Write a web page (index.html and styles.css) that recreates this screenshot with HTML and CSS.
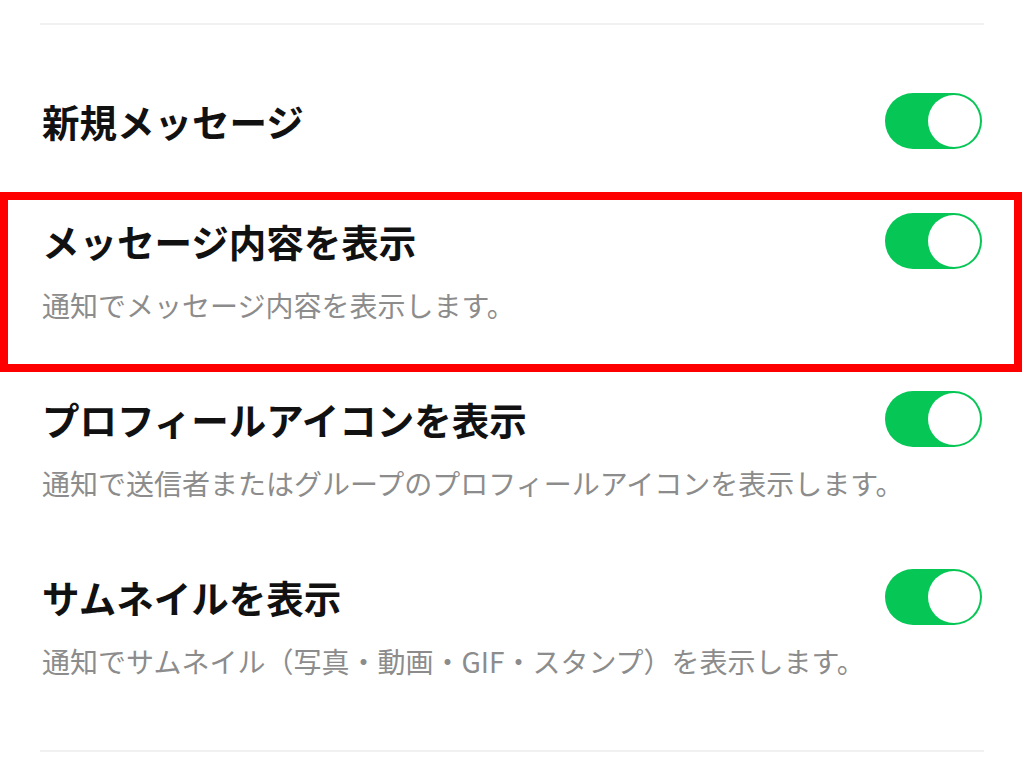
FILE: index.html
```html
<!DOCTYPE html>
<html lang="ja">
<head>
<meta charset="utf-8">
<title>通知設定</title>
<link rel="stylesheet" href="styles.css">
</head>
<body>
<div class="page">
  <div class="divider"></div>
  <div class="section">
    <div class="row">
      <div class="row-head">
        <span class="title">新規メッセージ</span>
        <span class="toggle"><span class="knob"></span></span>
      </div>
    </div>
    <div class="row">
      <div class="row-head">
        <span class="title">メッセージ内容を表示</span>
        <span class="toggle"><span class="knob"></span></span>
      </div>
      <div class="desc">通知でメッセージ内容を表示します。</div>
    </div>
    <div class="row">
      <div class="row-head">
        <span class="title">プロフィールアイコンを表示</span>
        <span class="toggle"><span class="knob"></span></span>
      </div>
      <div class="desc">通知で送信者またはグループのプロフィールアイコンを表示します。</div>
    </div>
    <div class="row">
      <div class="row-head">
        <span class="title">サムネイルを表示</span>
        <span class="toggle"><span class="knob"></span></span>
      </div>
      <div class="desc">通知でサムネイル（写真・動画・GIF・スタンプ）を表示します。</div>
    </div>
  </div>
  <div class="divider"></div>
  <div class="highlight"></div>
</div>
</body>
</html>
```

FILE: styles.css
```css
html, body {
  margin: 0;
  padding: 0;
  background: #ffffff;
}
body {
  font-family: "Noto Sans CJK JP", "Noto Sans", sans-serif;
  color: #111111;
}
.page {
  position: relative;
  width: 1024px;
  height: 758px;
  overflow: hidden;
  padding: 23px 40px 0;
  box-sizing: border-box;
}
.divider {
  height: 2px;
  background: #f1f1f1;
}
.section {
  padding: 36px 0 35px;
}
.row {
  padding: 32px 0;
}
.row-head {
  display: flex;
  align-items: center;
  justify-content: space-between;
  height: 56px;
}
.title {
  font-size: 37.5px;
  font-weight: 700;
  line-height: 56px;
  padding-left: 2px;
}
.desc {
  margin-top: 14px;
  font-size: 28px;
  line-height: 44px;
  color: #8c8c8c;
  padding-left: 2px;
}
.toggle {
  position: relative;
  flex: none;
  width: 97px;
  height: 56px;
  border-radius: 28px;
  background: #06c755;
  margin-right: 2px;
}
.knob {
  position: absolute;
  top: 2px;
  right: 2px;
  width: 52px;
  height: 52px;
  border-radius: 50%;
  background: #ffffff;
}
.highlight {
  position: absolute;
  left: 0;
  top: 192px;
  width: 1022px;
  height: 180px;
  border: 8px solid #ff0000;
  box-sizing: border-box;
}
```
